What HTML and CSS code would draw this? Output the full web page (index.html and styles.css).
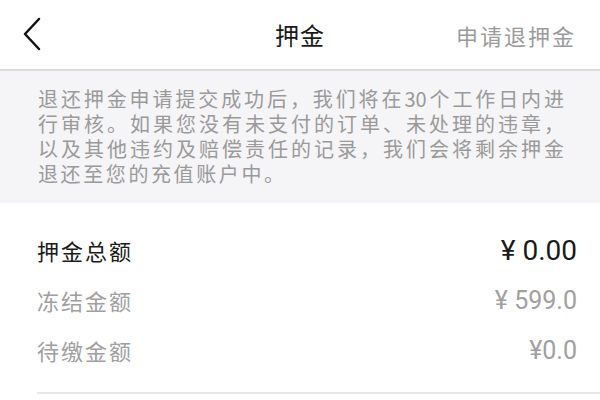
FILE: index.html
```html
<!DOCTYPE html>
<html lang="zh-CN">
<head>
    <meta charset="UTF-8">
    <title>押金</title>
    <link rel="stylesheet" href="styles.css">
</head>
<body>
    <div class="topbar">
        <div class="voltar">
            <svg width="24" height="36" viewBox="0 0 24 36">
                <polyline points="17,2 3,17 17,32" fill="none" stroke="#111" stroke-width="2.5" stroke-linecap="round" stroke-linejoin="round"/>
            </svg>
        </div>
        <div class="titulo">押金</div>
        <div class="acao">申请退押金</div>
    </div>
    <div class="aviso">
        <span class="cheia">退还押金申请提交成功后，我们将在30个工作日内进</span>
        <span class="cheia">行审核。如果您没有未支付的订单、未处理的违章，</span>
        <span class="cheia">以及其他违约及赔偿责任的记录，我们会将剩余押金</span>
        <span class="ultima">退还至您的充值账户中。</span>
    </div>
    <div class="valores">
        <div class="linha total">
            <span>押金总额</span>
            <span class="num">¥ 0.00</span>
        </div>
        <div class="linha">
            <span>冻结金额</span>
            <span class="num">¥ 599.0</span>
        </div>
        <div class="linha">
            <span>待缴金额</span>
            <span class="num">¥0.0</span>
        </div>
    </div>
</body>
</html>
```

FILE: styles.css
```css
body
{
    margin: 0;
    background: #fff;
    font-family: "Noto Sans CJK SC", "Noto Sans", sans-serif;
    width: 600px;
    height: 400px;
    overflow: hidden;
}
.topbar
{
    height: 69px;
    display: grid;
    grid-template-columns: 1fr auto 1fr;
    align-items: center;
    border-bottom: 2px solid #dcdcdc;
    background: #fff;
}
.voltar
{
    padding-left: 22px;
    display: flex;
    align-items: center;
}
.titulo
{
    font-size: 24px;
    color: #1a1a1a;
    letter-spacing: 1px;
}
.acao
{
    justify-self: end;
    padding-right: 24px;
    font-size: 22px;
    color: #9b9b9b;
    letter-spacing: 2px;
}
.aviso
{
    background: #f5f4f6;
    padding: 15px 36px 17px 38px;
    font-size: 20px;
    line-height: 25px;
    color: #9a9a9a;
}
.aviso span
{
    display: block;
    white-space: nowrap;
}
.cheia
{
    text-align: justify;
    text-align-last: justify;
    text-justify: inter-character;
}
.ultima
{
    letter-spacing: 2.6px;
}
.valores
{
    padding: 22px 23px 0 37px;
}
.linha
{
    display: flex;
    justify-content: space-between;
    align-items: center;
    height: 50px;
    font-size: 22px;
    letter-spacing: 2px;
    color: #a0a0a0;
}
.linha .num
{
    font-family: Roboto, "Noto Sans CJK SC", sans-serif;
    font-size: 25px;
    letter-spacing: 0;
}
.total
{
    color: #1a1a1a;
}
.total .num
{
    font-size: 28px;
}
.valores::after
{
    content: "";
    display: block;
    margin-top: 17px;
    margin-right: -23px;
    border-bottom: 2px solid #e8e8e8;
}
```
